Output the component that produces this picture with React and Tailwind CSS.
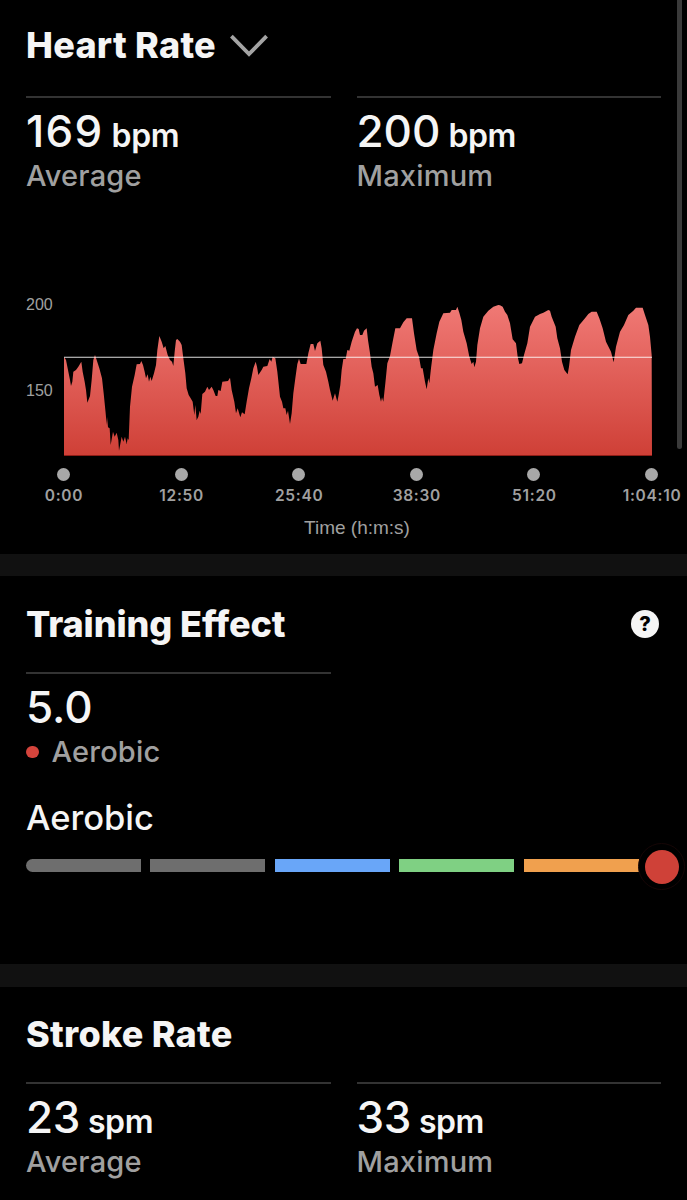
// heart rate samples, each segment starts at its own offset (3 units = 1px)
const SEGMENTS = [
  {
    start: -162,
    points: [
      [162, 200], [168, 210], [174, 240], [180, 270], [183, 288], [187, 275], [190, 245], [198, 240],
      [205, 230], [214, 215], [218, 245], [224, 275], [228, 300], [232, 338], [240, 318], [245, 270],
      [250, 210], [255, 195], [260, 210], [268, 235], [276, 265], [281, 310], [287, 370], [290, 405],
      [291, 380], [294, 412], [299, 415], [302, 465], [309, 425], [314, 440], [320, 428], [325, 450],
      [327, 482], [335, 440], [340, 455], [345, 440], [350, 462], [353, 445], [356, 450], [360, 350],
      [366, 290], [374, 255], [380, 223], [390, 222], [394, 213], [399, 225], [404, 245], [408, 265],
      [413, 253], [417, 275], [421, 260], [425, 273], [432, 250], [438, 225], [442, 180], [448, 138],
      [455, 155], [461, 175], [466, 168], [473, 195], [480, 210], [486, 215], [490, 228], [494, 185],
      [498, 150], [502, 147],
    ],
  },
  {
    start: 348,
    points: [
      [0, 155], [5, 165], [10, 205], [16, 250], [20, 295], [26, 315], [32, 325], [38, 335],
      [43, 375], [46, 345], [50, 390], [55, 380], [59, 362], [62, 372], [67, 312], [75, 305],
      [82, 290], [87, 300], [95, 290], [100, 300], [107, 318], [112, 318], [115, 300], [122, 303],
      [127, 275], [144, 273], [150, 263], [155, 300], [163, 335], [168, 370], [173, 355], [181, 382],
      [186, 367], [194, 373], [200, 335], [207, 295], [214, 265], [220, 235], [227, 215], [231, 230],
      [235, 255], [245, 240], [250, 230], [262, 228], [269, 207], [274, 215], [278, 200], [286, 205],
      [292, 245], [300, 320], [306, 335], [310, 355], [316, 355], [320, 375], [324, 362], [330, 402],
      [335, 370], [340, 310], [346, 265], [352, 222], [357, 206], [362, 222], [379, 222], [385, 190],
      [392, 162], [400, 162], [405, 183], [412, 160], [421, 152], [425, 175], [430, 225], [438, 245],
      [445, 275], [450, 300], [455, 320], [458, 332], [465, 310], [472, 335], [476, 315],
    ],
  },
  {
    start: 828,
    points: [
      [1, 285], [5, 240], [10, 207], [17, 207], [22, 180], [28, 182], [35, 155], [45, 125],
      [51, 115], [56, 117], [60, 135], [67, 135], [72, 122], [80, 115], [84, 150], [90, 190],
      [95, 230], [100, 250], [105, 290], [113, 285], [118, 315], [123, 335], [126, 322], [130, 335],
      [136, 280], [142, 220], [150, 198], [158, 155], [166, 115], [180, 115], [190, 97], [200, 85],
      [216, 85], [222, 130], [230, 180], [237, 200], [243, 235], [248, 235], [255, 275], [260, 298],
      [265, 265], [268, 280], [273, 235], [280, 180], [290, 130], [298, 95], [310, 70], [330, 68],
      [335, 60], [348, 60], [352, 50], [358, 68], [364, 90], [370, 125], [380, 160], [388, 200],
      [395, 222], [400, 215], [403, 232], [408, 215], [412, 165], [420, 115], [430, 80], [445, 62],
      [460, 50], [475, 45],
    ],
  },
  {
    start: 1308,
    points: [
      [0, 46], [8, 50], [15, 65], [22, 75], [30, 100], [38, 148], [48, 160], [53, 200],
      [58, 222], [66, 220], [72, 195], [82, 160], [90, 110], [105, 80], [120, 72], [130, 68],
      [145, 60], [150, 62], [155, 80], [167, 110], [172, 145], [180, 175], [186, 215], [193, 240],
      [203, 253], [207, 230], [213, 180], [225, 140], [238, 105], [255, 85], [265, 72], [275, 65],
      [290, 65], [298, 85], [308, 115], [318, 155], [333, 185], [341, 217], [348, 170], [360, 125],
      [372, 105], [385, 75], [400, 62], [408, 53], [428, 53], [435, 75], [445, 105], [450, 140],
      [455, 195],
    ],
  },
];

const TIMES = ["0:00", "12:50", "25:40", "38:30", "51:20", "1:04:10"];

const LEVELS = [
  "bg-[#6e6e6e] rounded-l-full",
  "bg-[#6e6e6e]",
  "bg-[#69a6f8]",
  "bg-[#7fd083]",
  "bg-[#f0a04e]",
];

function Title({ children, className = "tracking-[0.25px]" }) {
  return (
    <h2 className={`text-[36px] leading-10 font-extrabold text-[#f5f5f5] whitespace-nowrap ${className}`}>
      {children}
    </h2>
  );
}

function Stat({ value, unit, label, dot, valueClass = "" }) {
  return (
    <div className="border-t-2 border-[#333333] pt-[9px]">
      <div className="flex h-12 items-baseline gap-[8px] leading-[48px] text-[#f5f5f5]">
        <span className={`text-[44px] font-medium ${valueClass}`}>{value}</span>
        {unit && <span className="text-[32px] font-semibold tracking-[-0.4px]">{unit}</span>}
      </div>
      <div className="mt-[3px] flex items-center text-[29px] leading-9 font-medium tracking-[0.2px] text-[#a0a0a0]">
        {dot && <span className="mr-[13px] size-[12.5px] rounded-full bg-[#d5443c]" />}
        {label}
      </div>
    </div>
  );
}

function HeartRateChart() {
  const line = SEGMENTS.flatMap(({ start, points }) => points.map(([x, y]) => `${x + start},${y}`)).join(" L");

  return (
    <div className="mt-[96px]">
      <div className="flex pl-[26px]">
        {/* y axis */}
        <div className="flex w-[38px] flex-col pt-[5px] font-['Liberation_Sans',sans-serif] text-[16px] leading-5 text-[#a0a0a0]">
          <span>200</span>
          <span className="mt-[66px]">150</span>
        </div>
        <svg width="588" height="166" viewBox="0 0 1764 498">
          <defs>
            <linearGradient id="hr" gradientUnits="userSpaceOnUse" x1="0" y1="45" x2="0" y2="495">
              <stop offset="0" stopColor="#f07975" />
              <stop offset="1" stopColor="#cf4037" />
            </linearGradient>
          </defs>
          <path d={`M0,495 L${line} L1764,495 Z`} fill="url(#hr)" />
          <rect x="0" y="495" width="1764" height="3" fill="#8f1d17" />
          <rect x="0" y="200" width="1764" height="4" fill="#ffffff" fillOpacity="0.65" />
        </svg>
      </div>

      {/* x axis */}
      <div className="mt-[12px] ml-[63.5px] flex w-[588px] justify-between">
        {TIMES.map((t) => (
          <div key={t} className="flex w-0 flex-col items-center">
            <span className="size-[13px] rounded-full bg-[#a8a8a8]" />
            <span className="mt-[5px] pl-px text-[15.5px] leading-5 font-semibold tracking-[0.7px] whitespace-nowrap text-[#a0a0a0]">
              {t}
            </span>
          </div>
        ))}
      </div>
      <div className="mt-[10px] ml-[27px] text-center font-['Liberation_Sans',sans-serif] text-[19px] leading-6 text-[#a0a0a0]">
        Time (h:m:s)
      </div>
    </div>
  );
}

export default function App() {
  return (
    <div className="relative flex h-[1200px] w-[687px] flex-col overflow-hidden bg-black font-[Inter,sans-serif]">
      <section className="h-[554px] shrink-0 pt-[25px]">
        <div className="flex items-center gap-[13px] pl-[26px]">
          <Title>Heart Rate</Title>
          <svg width="40" height="26" viewBox="0 0 40 26" fill="none" stroke="#a4a4a4" strokeWidth="3.8">
            <path d="M2.4 4.2 L20 22.1 L37.6 4.2" />
          </svg>
        </div>
        <div className="mt-[31px] grid grid-cols-2 gap-[26px] px-[26px]">
          <Stat value="169" unit="bpm" label="Average" valueClass="tracking-[1.3px]" />
          <Stat value="200" unit="bpm" label="Maximum" />
        </div>
        <HeartRateChart />
      </section>

      <div className="h-[22px] shrink-0 bg-[#111111]" />

      <section className="h-[388px] shrink-0 px-[26px] pt-7">
        <div className="flex items-center justify-between">
          <Title className="tracking-[-0.1px]">Training Effect</Title>
          <span className="mr-[2px] flex size-7 items-center justify-center rounded-full bg-[#f5f5f5] text-[20px] leading-7 font-extrabold text-black">
            ?
          </span>
        </div>
        <div className="mt-7 grid grid-cols-2 gap-[26px]">
          <Stat value="5.0" label="Aerobic" dot />
        </div>
        <h3 className="mt-7 text-[34.5px] leading-10 font-medium text-[#f5f5f5]">Aerobic</h3>
        <div className="relative mt-[21px] flex gap-[9.4px]">
          {LEVELS.map((level, i) => (
            <div key={i} className={`h-[13px] w-[115px] shrink-0 ${level}`} />
          ))}
          {/* current value marker */}
          <div className="absolute top-[-16px] left-[612px] size-[47px] rounded-full border border-[#160606] bg-black p-[5.5px]">
            <div className="size-full rounded-full bg-[#cf4138]" />
          </div>
        </div>
      </section>

      <div className="h-[23px] shrink-0 bg-[#111111]" />

      <section className="px-[26px] pt-[27px]">
        <Title>Stroke Rate</Title>
        <div className="mt-7 grid grid-cols-2 gap-[26px]">
          <Stat value="23" unit="spm" label="Average" valueClass="tracking-[-0.4px]" />
          <Stat value="33" unit="spm" label="Maximum" valueClass="tracking-[-0.4px]" />
        </div>
      </section>

      {/* scroll indicator */}
      <div className="absolute top-0 right-[5px] h-[449px] w-[5px] rounded-b-full bg-[#3a3a3a]" />
    </div>
  );
}
